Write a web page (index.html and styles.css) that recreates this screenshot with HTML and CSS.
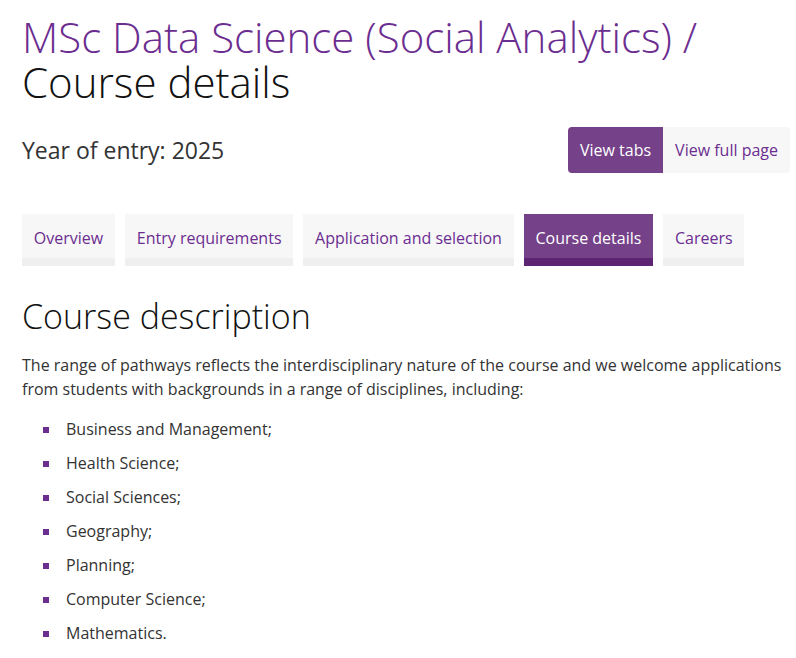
FILE: index.html
```html
<!DOCTYPE html>
<html lang="en">
<head>
<meta charset="utf-8">
<title>Course details</title>
<link rel="stylesheet" href="styles.css">
</head>
<body>
<main class="page">
  <h1 class="title"><span class="title-course">MSc Data Science (Social Analytics) /</span><br>Course details</h1>
  <div class="entry-row">
    <p class="entry-year">Year of entry: 2025</p>
    <div class="view-toggle">
      <a class="toggle-btn toggle-active" href="#">View tabs</a>
      <a class="toggle-btn" href="#">View full page</a>
    </div>
  </div>
  <nav class="tabs">
    <a class="tab" href="#">Overview</a>
    <a class="tab" href="#">Entry requirements</a>
    <a class="tab" href="#">Application and selection</a>
    <a class="tab tab-active" href="#">Course details</a>
    <a class="tab" href="#">Careers</a>
  </nav>
  <section class="content">
    <h2 class="section-title">Course description</h2>
    <p class="lead">The range of pathways reflects the interdisciplinary nature of the course and we welcome applications from students with backgrounds in a range of disciplines, including:</p>
    <ul class="disciplines">
      <li>Business and Management;</li>
      <li>Health Science;</li>
      <li>Social Sciences;</li>
      <li>Geography;</li>
      <li>Planning;</li>
      <li>Computer Science;</li>
      <li>Mathematics.</li>
    </ul>
  </section>
</main>
</body>
</html>
```
FILE: styles.css
```css
* { box-sizing: border-box; }
html, body { margin: 0; padding: 0; background: #fff; }
body {
  font-family: "Open Sans", "Noto Sans", sans-serif;
  color: #333;
  font-size: 16px;
}
.page { padding: 14px 6px 0 22px; }
.title {
  margin: 0;
  font-weight: 300;
  font-size: 42px;
  line-height: 45px;
  color: #111;
}
.title-course { color: #6b2d90; }
.entry-row {
  display: flex;
  justify-content: space-between;
  align-items: center;
  margin-top: 23px;
}
.entry-year {
  margin: 0;
  font-size: 23px;
  line-height: 46px;
  color: #333;
}
.view-toggle {
  display: flex;
  border-radius: 4px;
  overflow: hidden;
}
.toggle-btn {
  display: block;
  height: 46px;
  line-height: 46px;
  padding: 0 12px;
  font-size: 16px;
  text-decoration: none;
  color: #6b2d90;
  background: #f7f7f7;
}
.toggle-active { background: #754189; color: #fff; }
.tabs {
  display: flex;
  gap: 10px;
  margin-top: 41px;
}
.tab {
  display: block;
  height: 52px;
  padding: 0 11.8px;
  line-height: 48px;
  font-size: 16px;
  text-decoration: none;
  color: #6b2d90;
  background: #f7f7f7;
  border-bottom: 8px solid #efefef;
}
.tab-active {
  background: #754189;
  color: #fff;
  border-bottom-color: #5c2473;
}
.section-title {
  margin: 28px 0 0;
  font-weight: 300;
  font-size: 34px;
  line-height: 44px;
  color: #111;
}
.lead {
  margin: 15px 0 0;
  line-height: 24px;
}
.disciplines {
  list-style: none;
  margin: 16px 0 0;
  padding: 0 0 0 44px;
}
.disciplines li {
  position: relative;
  line-height: 24px;
  margin-bottom: 10px;
}
.disciplines li::before {
  content: "";
  position: absolute;
  left: -23px;
  top: 10px;
  width: 6px;
  height: 6px;
  background: #6b2d90;
}
```
